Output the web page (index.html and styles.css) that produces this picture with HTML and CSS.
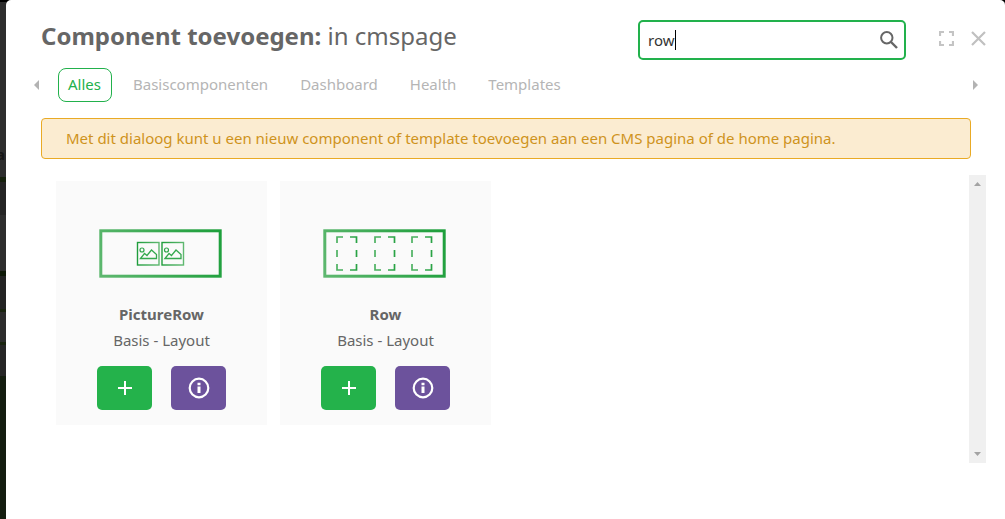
FILE: index.html
```html
<!DOCTYPE html>
<html lang="nl">
<head>
<meta charset="utf-8">
<meta name="viewport" content="width=device-width, initial-scale=1">
<title>Component toevoegen</title>
<link rel="stylesheet" href="styles.css">
</head>
<body>
<div class="backdrop">
  <span class="backdrop-text" aria-hidden="true">a</span>
  <main class="dialog" role="dialog" aria-labelledby="dialog-title">
    <header class="dialog-header">
      <h1 class="title" id="dialog-title"><strong>Component toevoegen:</strong> in cmspage</h1>
      <form class="search" role="search">
        <input class="search-input" type="text" value="row" aria-label="Zoeken" autofocus>
        <span class="caret" aria-hidden="true"></span>
        <button class="search-button" type="button" aria-label="Zoek">
          <svg width="18" height="18" viewBox="0 0 18 18" fill="none" stroke="#666" stroke-width="2"><circle cx="6.8" cy="6.8" r="5.7"/><path d="M11 11l6 6" stroke-width="2.4"/></svg>
        </button>
      </form>
      <div class="window-actions">
        <button class="icon-button" type="button" aria-label="Volledig scherm">
          <svg width="15" height="15" viewBox="0 0 15 15" fill="none" stroke="#c4c4c4" stroke-width="2.2"><path d="M1 5V1h4M10 1h4v4M14 10v4h-4M5 14H1v-4"/></svg>
        </button>
        <button class="icon-button" type="button" aria-label="Sluiten">
          <svg width="15" height="15" viewBox="0 0 15 15" fill="none" stroke="#c0c0c0" stroke-width="2.2"><path d="M1 1l13 13M14 1L1 14"/></svg>
        </button>
      </div>
    </header>
    <nav class="tabs" aria-label="Categorieën">
      <button class="tab-arrow" type="button" aria-label="Vorige"><svg width="5" height="10" viewBox="0 0 5 10"><path d="M5 0v10L0 5z" fill="#b3b3b3"/></svg></button>
      <a class="tab tab-active" href="#alles">Alles</a>
      <a class="tab" href="#basis">Basiscomponenten</a>
      <a class="tab" href="#dashboard">Dashboard</a>
      <a class="tab" href="#health">Health</a>
      <a class="tab" href="#templates">Templates</a>
      <button class="tab-arrow tab-next" type="button" aria-label="Volgende"><svg width="5" height="10" viewBox="0 0 5 10"><path d="M0 0v10l5-5z" fill="#b3b3b3"/></svg></button>
    </nav>
    <p class="notice">Met dit dialoog kunt u een nieuw component of template toevoegen aan een CMS pagina of de home pagina.</p>
    <section class="results">
      <div class="cards">
        <article class="card">
          <svg class="preview" width="123" height="49" viewBox="0 0 123 49" fill="none">
            <defs>
              <linearGradient id="frame" gradientUnits="userSpaceOnUse" x1="0" y1="49" x2="123" y2="0"><stop offset="0" stop-color="#5fb870"/><stop offset=".8" stop-color="#27a243"/><stop offset="1" stop-color="#1d9f3b"/></linearGradient>
              <linearGradient id="thumb" x1="0" x2="1"><stop offset="0" stop-color="#1f9d3c"/><stop offset="1" stop-color="#5fb870"/></linearGradient>
            </defs>
            <rect x="1.8" y="1.8" width="119.4" height="45.4" stroke="url(#frame)" stroke-width="3"/>
            <g id="picture">
              <rect x="38.5" y="13.5" width="21.5" height="22.5" stroke="url(#thumb)" stroke-width="1.4"/>
              <circle cx="43" cy="21" r="2" stroke="#2fa54a" stroke-width="1.2"/>
              <path d="M41.5 29.5l4-5 2.5 2 4.5-5.5 5 4.5v4z" stroke="#35a84f" stroke-width="1.3"/>
            </g>
            <use href="#picture" x="24.5"/>
          </svg>
          <h2 class="card-title">PictureRow</h2>
          <p class="card-type">Basis - Layout</p>
          <div class="card-actions">
            <button class="action action-add" type="button" aria-label="PictureRow toevoegen"><svg width="16" height="16" viewBox="0 0 16 16"><path d="M1 8h14M8 1v14" stroke="#fff" stroke-width="2"/></svg></button>
            <button class="action action-info" type="button" aria-label="Informatie over PictureRow"><svg width="22" height="22" viewBox="0 0 22 22"><circle cx="11" cy="11" r="9.3" fill="none" stroke="#fff" stroke-width="2.2"/><path d="M9.5 5.8h3v2.4h-3zM9.5 9.5h3v6.5h-3z" fill="#fff"/></svg></button>
          </div>
        </article>
        <article class="card">
          <svg class="preview" width="123" height="49" viewBox="0 0 123 49" fill="none">
            <defs>
              <linearGradient id="slot-line" gradientUnits="userSpaceOnUse" x1="13" y1="0" x2="35" y2="0"><stop offset="0" stop-color="#4fb263"/><stop offset="1" stop-color="#27a243"/></linearGradient>
            </defs>
            <rect x="1.8" y="1.8" width="119.4" height="45.4" stroke="url(#frame)" stroke-width="3"/>
            <g id="slot" stroke="url(#slot-line)" stroke-width="1.7">
              <path d="M14 14V8h6M27 8h6.5v6M14 21l.01 7M33.5 21l.01 7M14 35v6h6M27 41h6.5v-6"/>
            </g>
            <use href="#slot" x="38"/>
            <use href="#slot" x="75"/>
          </svg>
          <h2 class="card-title">Row</h2>
          <p class="card-type">Basis - Layout</p>
          <div class="card-actions">
            <button class="action action-add" type="button" aria-label="Row toevoegen"><svg width="16" height="16" viewBox="0 0 16 16"><path d="M1 8h14M8 1v14" stroke="#fff" stroke-width="2"/></svg></button>
            <button class="action action-info" type="button" aria-label="Informatie over Row"><svg width="22" height="22" viewBox="0 0 22 22"><circle cx="11" cy="11" r="9.3" fill="none" stroke="#fff" stroke-width="2.2"/><path d="M9.5 5.8h3v2.4h-3zM9.5 9.5h3v6.5h-3z" fill="#fff"/></svg></button>
          </div>
        </article>
      </div>
      <div class="scrollbar" aria-hidden="true">
        <svg width="7" height="4" viewBox="0 0 7 4"><path d="M0 4h7L3.5 0z" fill="#a3a3a3"/></svg>
        <svg width="7" height="4" viewBox="0 0 7 4"><path d="M0 0h7L3.5 4z" fill="#a3a3a3"/></svg>
      </div>
    </section>
  </main>
</div>
</body>
</html>
```
FILE: styles.css
```css
* { box-sizing: border-box; }

body {
  margin: 0;
  font-family: "Noto Sans", "Open Sans", sans-serif;
  font-size: 15px;
  line-height: 24px;
  color: #666;
}

h1, h2, p { margin: 0; }

button {
  display: flex;
  align-items: center;
  justify-content: center;
  padding: 0;
  border: 0;
  background: none;
  cursor: pointer;
}

.backdrop {
  position: relative;
  display: flex;
  min-height: 100vh;
  padding-left: 6px;
  overflow: hidden;
  background: linear-gradient(#000 2px, #2d2d2d 2px 177px, #15200c 177px 182px, #242424 182px 215px, #2d2d2d 215px 271px, #0e1907 271px 276px, #232323 276px 309px, #19240f 309px 312px, #2c2c2c 312px 342px, #19240f 342px 345px, #262626 345px 376px, #141d0f 376px);
}

.backdrop-text {
  position: absolute;
  left: -4px;
  top: 142px;
  font-weight: 700;
  color: #161616;
}

.dialog {
  position: relative;
  flex: 1;
  min-width: 0;
  padding: 20px 19px 56px 35px;
  border-radius: 5px 5px 0 0;
  background: #fff;
}

.dialog-header {
  display: flex;
  align-items: flex-start;
}

.title {
  flex: 1;
  font-size: 24px;
  line-height: 32px;
  font-weight: 400;
}

.search {
  position: relative;
  display: flex;
  width: 268px;
  height: 40px;
  padding-right: 6px;
  border: 2px solid #22b14c;
  border-radius: 5px;
}

.search-input {
  flex: 1;
  min-width: 0;
  padding: 0 8px;
  border: 0;
  outline: 0;
  background: none;
  font: inherit;
  color: #333;
  caret-color: transparent;
}

.caret {
  position: absolute;
  left: 35px;
  top: 8px;
  width: 1px;
  height: 20px;
  background: #000;
}

.window-actions {
  display: flex;
  gap: 17px;
  margin-left: 33px;
  padding-top: 11px;
}

.tabs {
  display: flex;
  align-items: center;
  margin: 8px 8px 0 -7px;
}

.tab {
  margin-right: 11px;
  padding: 3px 10px 5px 9px;
  border: 1px solid transparent;
  border-radius: 8px;
  color: #b5b5b5;
  text-decoration: none;
}

.tab-active {
  margin-left: 19px;
  border-color: #22b14c;
  color: #22b14c;
}

.tab-next { margin-left: auto; }

.notice {
  margin: 16px 15px 0 0;
  padding: 7px 24px 8px;
  border: 1px solid #e9aa25;
  border-radius: 4px;
  background: #fbecd1;
  color: #cf931c;
}

.results {
  display: flex;
  justify-content: space-between;
  margin-top: 16px;
  min-height: 288px;
}

.cards {
  display: flex;
  flex-wrap: wrap;
  align-items: flex-start;
  gap: 13px;
  padding: 6px 15px;
}

.card {
  display: flex;
  flex-direction: column;
  align-items: center;
  width: 211px;
  padding: 48px 0 15px;
  background: #fafafa;
}

.preview { margin-right: 2px; }

.card-title {
  margin-top: 24px;
  font-size: 15px;
  line-height: 24px;
}

.card-type { margin-top: 2px; }

.card-actions {
  display: flex;
  gap: 19px;
  margin-top: 14px;
}

.action {
  width: 55px;
  height: 44px;
  border-radius: 5px;
}

.action-add { background: #24b24b; }
.action-info { background: #6c529c; }

.scrollbar {
  display: flex;
  flex-direction: column;
  align-items: center;
  justify-content: space-between;
  width: 17px;
  padding: 7px 0;
  background: #f0f0f0;
}
```
